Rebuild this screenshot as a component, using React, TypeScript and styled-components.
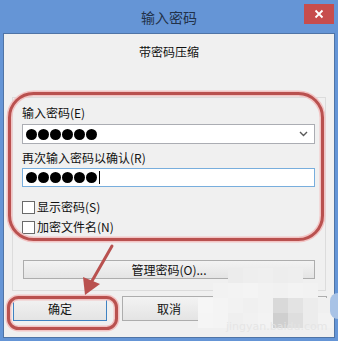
import React from "react";
import styled, { createGlobalStyle } from "styled-components";

const GlobalStyle = createGlobalStyle`
  body {
    margin: 0;
    background: #fff;
  }
`;

const font = `"Noto Sans CJK SC", "Noto Sans", sans-serif`;

const Window = styled.div`
  position: relative;
  width: 338px;
  height: 341px;
  background: #6595d6;
  display: flex;
  flex-direction: column;
  font-family: ${font};
  overflow: hidden;
`;

const TitleBar = styled.div`
  height: 33px;
  display: flex;
  align-items: center;
  justify-content: center;
  position: relative;
  font-size: 14px;
  color: #22324a;
`;

const CloseButton = styled.div`
  position: absolute;
  top: 4px;
  right: 4px;
  width: 30px;
  height: 20px;
  background: #c74d4d;
  display: flex;
  align-items: center;
  justify-content: center;
`;

const Panel = styled.div`
  flex: 1;
  margin: 0 3px 3px 3px;
  border: 1px solid #4f74a6;
  background: #f0f0f0;
  display: flex;
  flex-direction: column;
`;

const Subtitle = styled.div`
  padding-top: 10px;
  text-align: center;
  font-size: 12px;
  line-height: 16px;
  color: #111;
`;

const GroupBox = styled.div`
  margin: 37px 8px 0 8px;
  border: 1px solid #dcdcdc;
  padding: 7px 10px 11px 9px;
  display: flex;
  flex-direction: column;
`;

const Label = styled.div<{ $gap?: number }>`
  font-size: 12px;
  line-height: 16px;
  color: #111;
  margin-top: ${(p) => p.$gap ?? 0}px;
`;

const Field = styled.div<{ $focus?: boolean; $gap?: number }>`
  height: ${(p) => (p.$focus ? 17 : 18)}px;
  margin-top: ${(p) => p.$gap ?? 0}px;
  background: #fff;
  border: 1px solid ${(p) => (p.$focus ? "#78aedd" : "#abadb3")};
  display: flex;
  align-items: center;
  padding: 0 6px 0 3px;
`;

const Dots = styled.div`
  display: flex;
  gap: 1px;
  flex: 1;
  align-items: center;
`;

const Dot = styled.span`
  width: 11px;
  height: 11px;
  border-radius: 50%;
  background: #000;
`;

const Caret = styled.span`
  width: 1px;
  height: 13px;
  background: #000;
  margin-left: 1px;
`;

const CheckRow = styled.div<{ $gap: number }>`
  display: flex;
  align-items: center;
  gap: 2px;
  margin-top: ${(p) => p.$gap}px;
  font-size: 12px;
  line-height: 16px;
  color: #111;
`;

const Box = styled.span`
  width: 11px;
  height: 11px;
  background: #fff;
  border: 1px solid #6a6a6a;
`;

const Button = styled.div<{ $primary?: boolean; $width?: number }>`
  box-sizing: border-box;
  width: ${(p) => (p.$width ? `${p.$width}px` : "auto")};
  height: ${(p) => (p.$width ? 25 : 19)}px;
  border: 1px solid ${(p) => (p.$primary ? "#3f82c2" : "#adadad")};
  background: linear-gradient(#f3f3f3, #e4e4e4);
  display: flex;
  align-items: center;
  justify-content: center;
  font-size: 12px;
  color: #111;
`;

const ManageButton = styled(Button)`
  margin: 25px 0 0 1px;
`;

const ButtonRow = styled.div`
  display: flex;
  gap: 15px;
  margin-top: 5px;
  padding-left: 9px;
`;

const Overlay = styled.svg`
  position: absolute;
  left: 0;
  top: 0;
  pointer-events: none;
`;

const Mosaic = styled.div`
  position: absolute;
  left: 198px;
  top: 268px;
  display: grid;
  grid-template-columns: repeat(9, 15px);
  grid-template-rows: repeat(4, 15px);
`;

const Cell = styled.div<{ $c: string }>`
  background: ${(p) => p.$c};
`;

const Watermark = styled.div`
  position: absolute;
  left: 226px;
  top: 320px;
  font-family: "DejaVu Sans", sans-serif;
  font-size: 11px;
  color: rgba(228, 228, 228, 0.9);
`;

const BlueBlob = styled.div`
  position: absolute;
  right: 0;
  top: 293px;
  width: 8px;
  height: 26px;
  border-radius: 8px 0 0 8px;
  background: #a9c3e6;
`;

const mosaic = [
  "transparent", "transparent", "#ececec", "#eeeeee", "#efefef", "#ededed", "#eeeeee", "transparent", "transparent",
  "transparent", "#f2f2f2", "#f3f3f3", "#f4f4f4", "#f2f2f2", "#f1f1f1", "#f3f3f3", "#f2f2f2", "transparent",
  "#f6f6f6", "#f4f4f4", "#f2f2f2", "#f0f0f0", "#f2f2f2", "#d9d9d9", "#e3e3e3", "#ececec", "#f0f0f0",
  "#f5f5f5", "#f4f4f4", "#efefef", "#f1f1f1", "#f3f3f3", "#cfcfcf", "#dedede", "#ececec", "#f2f2f2",
];

export default function App() {
  return (
    <>
      <GlobalStyle />
      <Window>
        <TitleBar>
          输入密码
          <CloseButton>
            <svg width="10" height="10" viewBox="0 0 10 10">
              <path d="M1.5 1.5 L8.5 8.5 M8.5 1.5 L1.5 8.5" stroke="#fff" strokeWidth="1.8" />
            </svg>
          </CloseButton>
        </TitleBar>
        <Panel>
          <Subtitle>带密码压缩</Subtitle>
          <GroupBox>
            <Label>输入密码(E)</Label>
            <Field $gap={3}>
              <Dots>
                {Array.from({ length: 6 }).map((_, i) => (
                  <Dot key={i} />
                ))}
              </Dots>
              <svg width="9" height="6" viewBox="0 0 9 6">
                <path d="M1 1 L4.5 4.5 L8 1" stroke="#5a5a5a" strokeWidth="1.4" fill="none" />
              </svg>
            </Field>
            <Label $gap={6}>再次输入密码以确认(R)</Label>
            <Field $focus $gap={2}>
              <Dots>
                {Array.from({ length: 6 }).map((_, i) => (
                  <Dot key={i} />
                ))}
                <Caret />
              </Dots>
            </Field>
            <CheckRow $gap={12}>
              <Box />
              显示密码(S)
            </CheckRow>
            <CheckRow $gap={4}>
              <Box />
              加密文件名(N)
            </CheckRow>
            <ManageButton>管理密码(O)...</ManageButton>
          </GroupBox>
          <ButtonRow>
            <Button $primary $width={94}>确定</Button>
            <Button $width={94}>取消</Button>
            <Button $width={96}>帮助</Button>
          </ButtonRow>
        </Panel>

        <Mosaic>
          {mosaic.map((c, i) => (
            <Cell key={i} $c={c} />
          ))}
        </Mosaic>
        <Watermark>jingyan.baidu.com</Watermark>
        <BlueBlob />

        <Overlay width="338" height="341" viewBox="0 0 338 341">
          <g fill="none">
            <rect x="9.5" y="93.5" width="313" height="146" rx="24" stroke="#f2c4c4" strokeWidth="6" />
            <rect x="9.5" y="93.5" width="313" height="146" rx="24" stroke="#b9514f" strokeWidth="3" />
            <rect x="8.5" y="297.5" width="108" height="31" rx="10" stroke="#f2c4c4" strokeWidth="6" />
            <rect x="8.5" y="297.5" width="108" height="31" rx="10" stroke="#b9514f" strokeWidth="3" />
            <path d="M112 246 L92 281" stroke="#b9514f" strokeWidth="3" strokeLinecap="round" />
          </g>
          <polygon points="83,277 85,295 100,284" fill="#b9514f" />
        </Overlay>
      </Window>
    </>
  );
}
